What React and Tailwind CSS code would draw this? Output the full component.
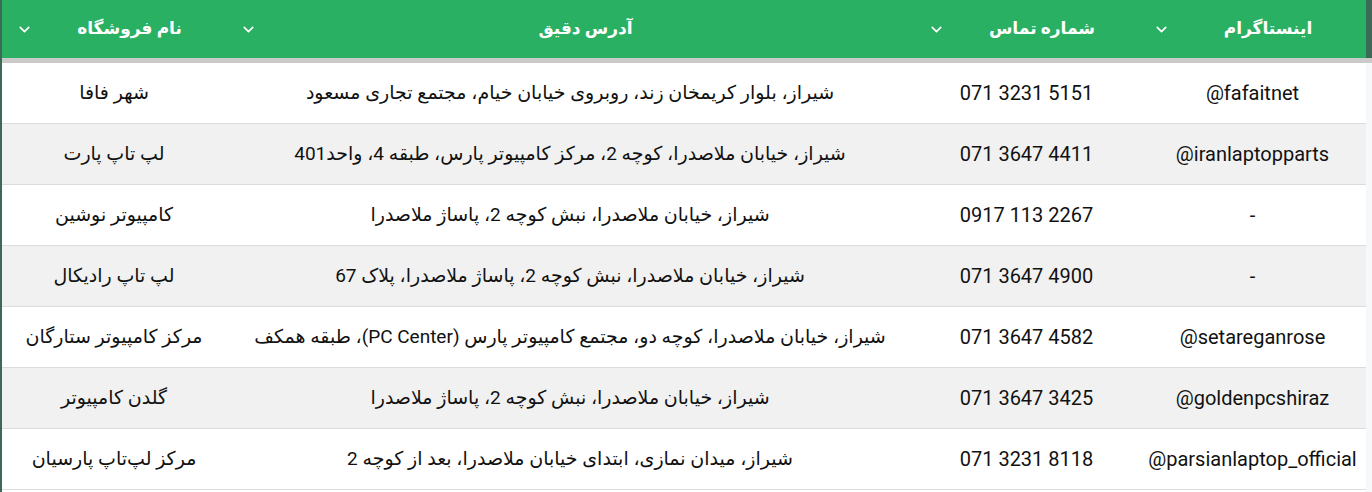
import * as React from 'react';
import { ChevronDown } from 'lucide-react';

const columns = [
    { key: 'name', title: 'نام فروشگاه', width: 'w-[224px]', size: 'text-[19px]' },
    { key: 'address', title: 'آدرس دقیق', width: 'w-[688px]', size: 'text-[19px]' },
    { key: 'phone', title: 'شماره تماس', width: 'w-[225px]', size: 'text-[20px]' },
    { key: 'insta', title: 'اینستاگرام', width: 'w-[227px]', size: 'text-[20px]' },
];

const rows = [
    { name: 'شهر فافا', address: 'شیراز، بلوار کریمخان زند، روبروی خیابان خیام، مجتمع تجاری مسعود', phone: '071 3231 5151', insta: '@fafaitnet' },
    { name: 'لپ تاپ پارت', address: 'شیراز، خیابان ملاصدرا، کوچه 2، مرکز کامپیوتر پارس، طبقه 4، واحد401', phone: '071 3647 4411', insta: '@iranlaptopparts' },
    { name: 'کامپیوتر نوشین', address: 'شیراز، خیابان ملاصدرا، نبش کوچه 2، پاساژ ملاصدرا', phone: '0917 113 2267', insta: '-' },
    { name: 'لپ تاپ رادیکال', address: 'شیراز، خیابان ملاصدرا، نبش کوچه 2، پاساژ ملاصدرا، پلاک 67', phone: '071 3647 4900', insta: '-' },
    { name: 'مرکز کامپیوتر ستارگان', address: 'شیراز، خیابان ملاصدرا، کوچه دو، مجتمع کامپیوتر پارس (PC Center)، طبقه همکف', phone: '071 3647 4582', insta: '@setareganrose' },
    { name: 'گلدن کامپیوتر', address: 'شیراز، خیابان ملاصدرا، نبش کوچه 2، پاساژ ملاصدرا', phone: '071 3647 3425', insta: '@goldenpcshiraz' },
    { name: 'مرکز لپ‌تاپ پارسیان', address: 'شیراز، میدان نمازی، ابتدای خیابان ملاصدرا، بعد از کوچه 2', phone: '071 3231 8118', insta: '@parsianlaptop_official' },
];

export default function App() {
    return (
        <div className="flex h-[492px] w-[1372px] overflow-hidden bg-white font-['Roboto','DejaVu_Sans',sans-serif] text-[#111]">
            <div className="w-[2px] shrink-0 bg-[#3b6b56]" />

            <div className="flex w-[1364px] shrink-0 flex-col">
                {/* header */}
                <div className="flex h-[58px] shrink-0 bg-[#29b063] text-white">
                    {columns.map(c => (
                        <div key={c.key} className={`${c.width} flex shrink-0 items-center pl-[14px]`}>
                            <ChevronDown className="h-[17px] w-[17px] shrink-0" strokeWidth={2.3} />
                            <span dir="rtl" className="flex-1 text-center text-[17px] font-bold">{c.title}</span>
                        </div>
                    ))}
                </div>
                <div className="h-[5px] shrink-0 bg-[#cacaca]" />

                {/* body */}
                {rows.map((r, i) => (
                    <div
                        key={i}
                        className={`flex h-[61px] shrink-0 border-b border-[#dcdcdc] ${i % 2 === 1 ? 'bg-[#f1f1f1]' : 'bg-white'}`}
                    >
                        {columns.map(c => (
                            <div key={c.key} dir="auto" className={`${c.width} ${c.size} flex shrink-0 items-center justify-center text-center whitespace-nowrap`}>
                                {r[c.key]}
                            </div>
                        ))}
                    </div>
                ))}
            </div>

            <div className="flex flex-1 flex-col">
                <div className="h-[58px] bg-[#3b6b56]" />
                <div className="h-[5px] bg-[#cacaca]" />
                <div className="flex-1 bg-[#f7f8fa]" />
            </div>
        </div>
    );
}
